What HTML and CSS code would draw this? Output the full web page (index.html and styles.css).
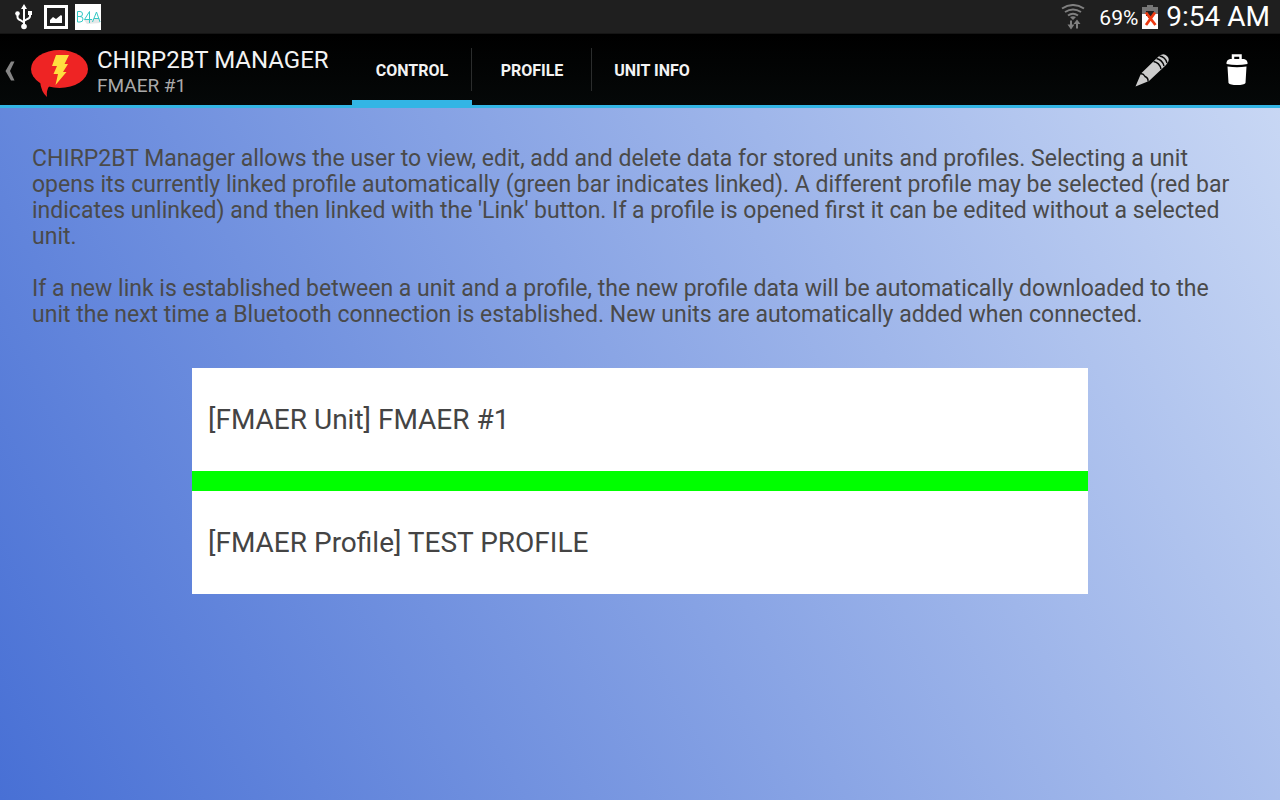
FILE: index.html
```html
<!DOCTYPE html>
<html lang="en">
<head>
<meta charset="utf-8">
<meta name="viewport" content="width=device-width, initial-scale=1">
<title>CHIRP2BT Manager</title>
<link rel="stylesheet" href="styles.css">
</head>
<body>
<div class="status">
  <div class="notices">
    <svg class="usb" width="18" height="26" viewBox="0 0 18 26" fill="none" stroke="#fff" stroke-width="2" role="img" aria-label="USB connected">
      <path d="M9 4V22M2.500 9V13Q2.500 15 5 16L9 18.500M15 9V12Q15 14 12.500 15L9 17"/>
      <path d="M9 0L12 5H6ZM13 7H17V11H13Z" fill="#fff" stroke="none"/>
      <circle cx="2.500" cy="9.500" r="2.300" fill="#fff" stroke="none"/><circle cx="9" cy="22.500" r="2.800" fill="#fff" stroke="none"/>
    </svg>
    <svg width="24" height="24" viewBox="0 0 24 24" role="img" aria-label="Screenshot saved">
      <path d="M1.500 1.500H22.500V22.500H1.500Z" fill="none" stroke="#fff" stroke-width="3"/>
      <path d="M6 18V15L9 12L12 14L17 10L18 11V18Z" fill="#fff"/>
    </svg>
    <svg width="26" height="26" viewBox="0 0 26 26" role="img" aria-label="B4A">
      <path d="M0 0H26V26H0Z" fill="#fff"/>
      <path d="M9 16L25 14V19L12 20Z" fill="#e5e8e8"/>
      <path d="M2.500 7.500V18H5Q8 18 8 15Q8 12.500 5 12.500H2.500M2.500 7.500H5Q7.500 7.500 7.500 10Q7.500 12.500 5 12.500M14.500 19V7.500L9.500 15.500H17M17.500 18L21.500 8L25 18M19 14.500H24" fill="none" stroke="#35c9c5"/>
    </svg>
  </div>
  <div class="system">
    <svg class="wifi" width="24" height="26" viewBox="0 0 24 26" fill="none" stroke="#808080" stroke-width="2" role="img" aria-label="Wi-Fi">
      <path d="M1 4.500Q12 -2.500 23 4.500M4 8Q12 3 20 8M7 11.500Q12 8 17 11.500"/>
      <path d="M9 13Q12 11.500 15 13L12 16ZM6.500 20.500H13.500L10 25.500ZM12.500 20L16 15.500L19.500 20Z" fill="#808080" stroke="none"/>
      <path d="M10 16.500V22M16 19V24.500"/>
    </svg>
    <span class="percent">69%</span>
    <svg class="battery" width="16" height="24" viewBox="0 0 16 24" role="img" aria-label="Battery not charging">
      <path d="M5 0H11V2H16V9H0V2H5Z" fill="#777"/>
      <path d="M0 9H16V24H0Z" fill="#fff"/>
      <path d="M4 6H12V11H10V13H6V11H4Z" fill="#222"/>
      <path d="M4 7.500Q8 13 13.500 20M13 7.500L4 20" fill="none" stroke="#ee3b12" stroke-width="2.800"/>
    </svg>
    <span class="clock">9:54 AM</span>
  </div>
</div>
<header class="bar">
  <a class="home" href="#" aria-label="Navigate up">
    <svg class="back" width="10" height="20" viewBox="0 0 10 20"><path d="M6 0.500H9.500L5 10L9.500 19.500H6L0.500 10Z" fill="#858585"/></svg>
    <svg class="logo" width="58" height="48" viewBox="0 0 58 48">
      <ellipse cx="28.500" cy="19" rx="28.500" ry="19" fill="#ee2424"/>
      <path d="M9 31Q10 42 16 47Q15 40 19 35Z" fill="#ee2424"/>
      <path d="M25 5H38L33.500 14H37L32 22H35.500L24.500 35L27 24H22.500L26 16H21Z" fill="#ffdf3f"/>
    </svg>
    <span class="titles"><span class="title">CHIRP2BT MANAGER</span><span class="subtitle">FMAER #1</span></span>
  </a>
  <nav class="tabs">
    <button class="tab active" type="button" aria-current="page">CONTROL</button>
    <button class="tab" type="button">PROFILE</button>
    <button class="tab" type="button">UNIT INFO</button>
  </nav>
  <div class="actions">
    <button class="action" type="button" aria-label="Edit">
      <svg width="34" height="34" viewBox="0 0 34 34">
        <path d="M0.500 33.500L6 20.500L23 4Q28-1 32 3Q36 7 31 12L14 28Z" fill="#ccc"/>
        <path d="M5.500 21Q8 20 10 23.500Q13.500 25 13 28.500M18.500 8.500Q24.500 9.500 26 16M21.500 5.500Q27.500 7 29 13M24.500 3Q30.500 4 32 10" fill="none" stroke="#050606" stroke-width="1.400"/>
      </svg>
    </button>
    <button class="action" type="button" aria-label="Delete">
      <svg width="22" height="32" viewBox="0 0 22 32">
        <path d="M7 6V1.500H14.500V6" fill="none" stroke="#fff" stroke-width="2.500"/>
        <path d="M4 5H18Q22 6 21.500 10Q11 12 0.500 10Q0 6 4 5ZM1.500 12.500Q11 14 20.500 12.500L19.500 29Q18 31 11 31Q4 31 2.500 29Z" fill="#fff"/>
      </svg>
    </button>
  </div>
</header>
<main class="content">
  <div class="help">
    <p>CHIRP2BT Manager allows the user to view, edit, add and delete data for stored units and profiles. Selecting a unit opens its currently linked profile automatically (green bar indicates linked). A different profile may be selected (red bar indicates unlinked) and then linked with the 'Link' button. If a profile is opened first it can be edited without a selected unit.</p>
    <p>If a new link is established between a unit and a profile, the new profile data will be automatically downloaded to the unit the next time a Bluetooth connection is established. New units are automatically added when connected.</p>
  </div>
  <div class="link">
    <button class="choice" type="button">[FMAER Unit] FMAER #1</button>
    <div class="linked"></div>
    <button class="choice" type="button">[FMAER Profile] TEST PROFILE</button>
  </div>
</main>
</body>
</html>
```
FILE: styles.css
```css
* { box-sizing: border-box; }
body {
  margin: 0;
  min-height: 100vh;
  display: flex;
  flex-direction: column;
  font-family: Roboto, "Liberation Sans", sans-serif;
  background: #000;
}
button { font: inherit; border: 0; background: none; padding: 0; cursor: pointer; }
svg { display: block; flex: none; }
.status {
  height: 34px;
  padding: 0 10px 0 15px;
  display: flex;
  align-items: center;
  justify-content: space-between;
  background: #1f1f1f;
  border-bottom: 1px solid #151515;
  color: #fff;
}
.notices, .system { display: flex; align-items: center; }
.notices { gap: 7px; }
.notices .usb { margin-right: 4px; }
.percent { font-size: 21px; margin: 2px 4px 0 14px; }
.clock { font-size: 28px; margin-left: 8px; }
.bar {
  height: 74px;
  display: flex;
  align-items: stretch;
  background: linear-gradient(#000, #050808);
  border-bottom: 3px solid #33b5e5;
}
.home { display: flex; align-items: center; padding-left: 5px; text-decoration: none; }
.back { margin-top: 2px; }
.logo { margin: 8px 8px 0 16px; }
.titles { display: flex; flex-direction: column; width: 255px; padding-top: 4px; white-space: nowrap; }
.title { font-size: 24px; line-height: 28px; color: #f3f3f3; }
.subtitle { font-size: 19px; line-height: 24px; color: #aaa; }
.tabs { display: flex; }
.tab {
  width: 120px;
  padding-top: 2px;
  font-size: 16px;
  font-weight: 700;
  color: #f3f3f3;
  border-bottom: 5px solid transparent;
  border-top: 5px solid transparent;
  background: linear-gradient(#2b2d2d, #2b2d2d) right center / 1px 43px no-repeat;
}
.tab:last-child { background: none; }
.tab.active { border-bottom-color: #33b5e5; }
.actions { margin-left: auto; padding-right: 1px; display: flex; }
.action { width: 85px; display: flex; align-items: center; justify-content: center; }
.content {
  flex: 1;
  padding: 38px 32px;
  background: linear-gradient(62deg, #4870d5, #c8d7f4);
}
.help { color: #4a4a4a; font-size: 23px; line-height: 26px; }
.help p { margin: 0 0 26px; }
.link { width: 896px; max-width: 100%; margin: 40px auto 0; }
.choice {
  display: block;
  width: 100%;
  padding: 35px 16px;
  background: #fff;
  color: #444;
  font-size: 28px;
  line-height: 33px;
  text-align: left;
}
.linked { height: 20px; background: #0f0; }
```
